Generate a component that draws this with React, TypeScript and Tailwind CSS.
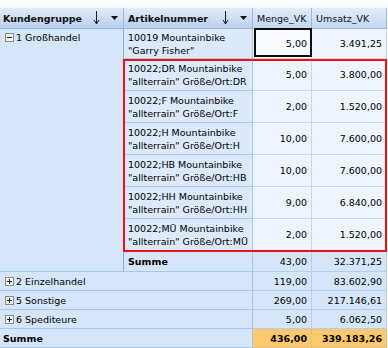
import React from 'react';

type Leaf = { art: [string, string]; menge: string; umsatz: string };

const LEAVES: Leaf[] = [
  { art: ['10022;DR Mountainbike', '"allterrain" Größe/Ort:DR'], menge: '5,00', umsatz: '3.800,00' },
  { art: ['10022;F Mountainbike', '"allterrain" Größe/Ort:F'], menge: '2,00', umsatz: '1.520,00' },
  { art: ['10022;H Mountainbike', '"allterrain" Größe/Ort:H'], menge: '10,00', umsatz: '7.600,00' },
  { art: ['10022;HB Mountainbike', '"allterrain" Größe/Ort:HB'], menge: '10,00', umsatz: '7.600,00' },
  { art: ['10022;HH Mountainbike', '"allterrain" Größe/Ort:HH'], menge: '9,00', umsatz: '6.840,00' },
  { art: ['10022;MÜ Mountainbike', '"allterrain" Größe/Ort:MÜ'], menge: '2,00', umsatz: '1.520,00' },
];

const GROUPS = [
  { label: '2 Einzelhandel', menge: '119,00', umsatz: '83.602,90' },
  { label: '5 Sonstige', menge: '269,00', umsatz: '217.146,61' },
  { label: '6 Spediteure', menge: '5,00', umsatz: '6.062,50' },
];

const SortArrow = () => (
  <svg width="7" height="14" viewBox="0 0 7 14" className="shrink-0">
    <line x1="3.5" y1="0" x2="3.5" y2="13" stroke="#1b1b1b" strokeWidth="1" />
    <polyline points="1,9 3.5,13 6,9" fill="none" stroke="#1b1b1b" strokeWidth="1" />
  </svg>
);

const DropTri = () => (
  <svg width="7" height="4" viewBox="0 0 7 4" className="shrink-0 ml-[11px]">
    <polygon points="0,0 7,0 3.5,4" fill="#111" />
  </svg>
);

const ExpandBox = ({ open }: { open: boolean }) => (
  <span className="relative inline-block w-[9px] h-[9px] border border-[#8a8a8a] bg-[#f4f4f4] shrink-0">
    <span className="absolute left-[1px] top-[3px] w-[5px] h-px bg-[#222]" />
    {!open && <span className="absolute left-[3px] top-[1px] w-px h-[5px] bg-[#222]" />}
  </span>
);

const hdr =
  'flex items-center border-r border-b border-[#97b6e0] bg-gradient-to-b from-[#e2ecf9] to-[#b9cfec] text-[#111]';
const dim = 'border-r border-b border-[#a9c5ea] bg-[#d6e6fa]';
const data = 'flex items-center justify-end border-r border-b border-[#c7d8ef] bg-[#eef4fd] pr-[4px]';
const sumData = 'flex items-center justify-end border-r border-b border-[#b5cced] bg-[#d6e6fa] pr-[4px]';

export default function App() {
  return (
    <div className="w-[388px] h-[348px] bg-white overflow-hidden font-['DejaVu_Sans',sans-serif] text-[9.5px] leading-[13px] text-black">
      <div className="h-[8px] bg-gradient-to-b from-white to-[#f3f7fc]" />
      <div className="relative grid grid-cols-[124px_129px_59px_75px] grid-rows-[21px_30px_repeat(6,32px)_21px_repeat(4,19px)]">
        {/* header */}
        <div className={`${hdr} pl-[3px] pr-[5px]`}>
          <span className="font-bold">Kundengruppe</span>
          <span className="flex-1" />
          <SortArrow />
          <DropTri />
        </div>
        <div className={`${hdr} pl-[4px] pr-[5px]`}>
          <span className="font-bold">Artikelnummer</span>
          <span className="flex-1" />
          <SortArrow />
          <DropTri />
        </div>
        <div className={`${hdr} pl-[4px] bg-gradient-to-b from-[#d3e2f6] to-[#c2d6f1]`}>Menge_VK</div>
        <div className={`${hdr} pl-[4px] bg-gradient-to-b from-[#d3e2f6] to-[#c2d6f1]`}>Umsatz_VK</div>

        {/* group 1 */}
        <div className={`${dim} row-span-8 border-r-[#86acdf] pl-[5px] pt-[2px]`}>
          <div className="flex items-center gap-[2px]">
            <ExpandBox open />
            <span>1 Großhandel</span>
          </div>
        </div>

        <div className={`${dim} flex flex-col justify-center pl-[4px] bg-[#dbe9fb]`}>
          <span>10019 Mountainbike</span>
          <span>"Garry Fisher"</span>
        </div>
        <div className={`${data} relative bg-[#f7faff]`}>
          5,00
          <span className="absolute left-[1px] top-[-1px] w-[58px] h-[29px] border-2 border-[#0d0d0d]" />
        </div>
        <div className={data}>3.491,25</div>

        {LEAVES.map((l) => (
          <React.Fragment key={l.art[0]}>
            <div className={`${dim} flex flex-col justify-center pl-[4px] pt-[1px] bg-[#dbe9fb]`}>
              <span>{l.art[0]}</span>
              <span>{l.art[1]}</span>
            </div>
            <div className={data}>{l.menge}</div>
            <div className={data}>{l.umsatz}</div>
          </React.Fragment>
        ))}

        <div className={`${dim} flex items-center pl-[4px] font-bold`}>Summe</div>
        <div className={sumData}>43,00</div>
        <div className={sumData}>32.371,25</div>

        {GROUPS.map((g) => (
          <React.Fragment key={g.label}>
            <div className={`${dim} col-span-2 flex items-center gap-[2px] pl-[5px]`}>
              <ExpandBox open={false} />
              <span>{g.label}</span>
            </div>
            <div className={sumData}>{g.menge}</div>
            <div className={sumData}>{g.umsatz}</div>
          </React.Fragment>
        ))}

        <div className={`${dim} col-span-2 flex items-center pl-[3px] font-bold`}>Summe</div>
        <div className={`${sumData} bg-[#fec96d] font-bold border-[#e0c08a]`}>436,00</div>
        <div className={`${sumData} bg-[#fec96d] font-bold border-[#e0c08a]`}>339.183,26</div>

        {/* highlighted selection */}
        <div className="absolute left-[123px] top-[51px] w-[264px] h-[193px] border-2 border-[#ee1111] pointer-events-none" />
      </div>
    </div>
  );
}
